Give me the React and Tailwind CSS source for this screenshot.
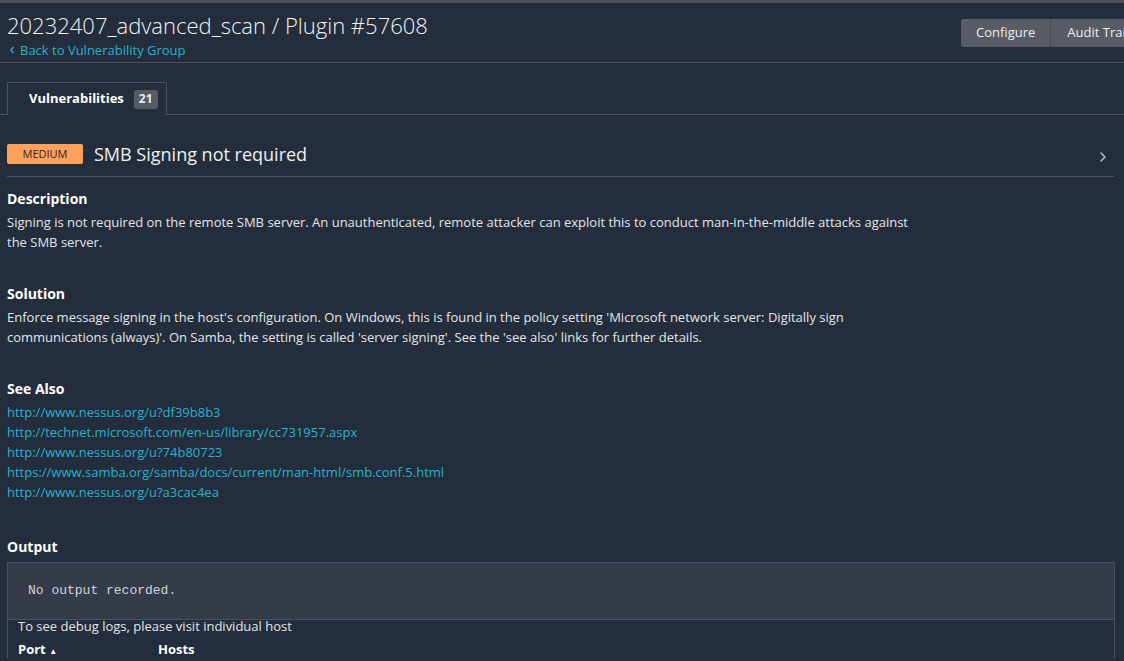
import React from "react";
import { ChevronLeft, ChevronRight } from "lucide-react";

const links = [
  "http://www.nessus.org/u?df39b8b3",
  "http://technet.microsoft.com/en-us/library/cc731957.aspx",
  "http://www.nessus.org/u?74b80723",
  "https://www.samba.org/samba/docs/current/man-html/smb.conf.5.html",
  "http://www.nessus.org/u?a3cac4ea",
];

const Section = ({ title, children, className = "" }) => (
  <div className={className}>
    <h3 className="text-[14px] leading-[20px] font-bold text-white mb-[3px]">{title}</h3>
    {children}
  </div>
);

const App = () => {
  return (
    <div
      className="min-h-[661px] w-full overflow-hidden bg-[#242d3c] text-[#e3e5e8]"
      style={{ fontFamily: "'Open Sans', 'Noto Sans', sans-serif" }}
    >
      <div className="h-[3px] bg-[#4a4f58]" />

      {/* Header */}
      <div className="flex border-b border-[#4b5262] h-[60px]">
        <div className="w-[961px] shrink-0 pl-[7px] pt-[7px]">
          <h1 className="text-[22px] leading-[30px] font-light text-[#f2f3f5] whitespace-nowrap">
            20232407_advanced_scan / Plugin #57608
          </h1>
          <a className="flex items-center gap-[3px] text-[13px] leading-[18px] text-[#23b4cf] mt-[1px]">
            <ChevronLeft size={10} strokeWidth={3.5} />
            Back to Vulnerability Group
          </a>
        </div>
        <div className="flex shrink-0 mt-[16px] h-[28px]">
          <button className="h-full px-[15px] text-[13px] text-[#eceef0] bg-[#575c66] rounded-l-[3px] border-r border-[#474b53]">
            Configure
          </button>
          <button className="h-full px-[16px] text-[13px] text-[#eceef0] bg-[#575c66] whitespace-nowrap">
            Audit Trail
          </button>
        </div>
      </div>

      {/* Tabs */}
      <div className="flex mt-[19px]">
        <div className="w-[7px] border-b border-[#4b5262]" />
        <div className="flex items-center h-[33px] w-[160px] pl-[21px] gap-[10px] border border-b-0 border-[#4b5262] rounded-t-[2px]">
          <span className="text-[13px] font-bold text-white">Vulnerabilities</span>
          <span className="h-[19px] px-[5px] flex items-center text-[12px] font-bold text-[#e9eaec] bg-[#555a64] rounded-[2px]">
            21
          </span>
        </div>
        <div className="flex-1 border-b border-[#4b5262]" />
      </div>

      <div className="pl-[7px] pr-[9px]">
        {/* Title row */}
        <div className="flex items-center h-[45px] mt-[17px] border-b border-[#4b5262] mr-[1px]">
          <span className="w-[76px] h-[20px] flex items-center justify-center bg-[#ffa15c] text-[#2a2622] text-[11px] rounded-[2px]">
            MEDIUM
          </span>
          <span className="ml-[11px] text-[18px] text-[#eef0f2]">SMB Signing not required</span>
          <ChevronRight size={16} strokeWidth={2.2} className="ml-auto mr-[3px] mt-[5px] text-[#aebcdc]" />
        </div>

        <div className="text-[13px] leading-[20px]">
          <Section title="Description" className="mt-[12px]">
            <p className="w-[915px]">
              Signing is not required on the remote SMB server. An unauthenticated, remote attacker can
              exploit this to conduct man-in-the-middle attacks against the SMB server.
            </p>
          </Section>

          <Section title="Solution" className="mt-[32px]">
            <p className="w-[915px]">
              Enforce message signing in the host's configuration. On Windows, this is found in the policy
              setting 'Microsoft network server: Digitally sign communications (always)'. On Samba, the
              setting is called 'server signing'. See the 'see also' links for further details.
            </p>
          </Section>

          <Section title="See Also" className="mt-[32px]">
            {links.map((l) => (
              <a key={l} className="block text-[#23b4cf]">
                {l}
              </a>
            ))}
          </Section>

          <div className="mt-[35px]">
            <h3 className="text-[14px] leading-[20px] font-bold text-white mb-[5px]">Output</h3>
            <div className="border border-b-0 border-[#4b5160]">
              <div className="h-[57px] bg-[#353b48] border-b border-[#4b5160] pl-[20px] flex items-center">
                <pre
                  className="text-[13px] text-[#d0d3d8]"
                  style={{ fontFamily: "'Liberation Mono', monospace" }}
                >
                  No output recorded.
                </pre>
              </div>
              <div className="pl-[10px]">
                <div className="leading-[13px]">To see debug logs, please visit individual host</div>
                <div className="flex font-bold text-white mt-[9px] leading-[14px]">
                  <span className="w-[140px]">
                    Port <span className="text-[8px]">▲</span>
                  </span>
                  <span>Hosts</span>
                </div>
              </div>
            </div>
          </div>
        </div>
      </div>
    </div>
  );
};

export default App;
